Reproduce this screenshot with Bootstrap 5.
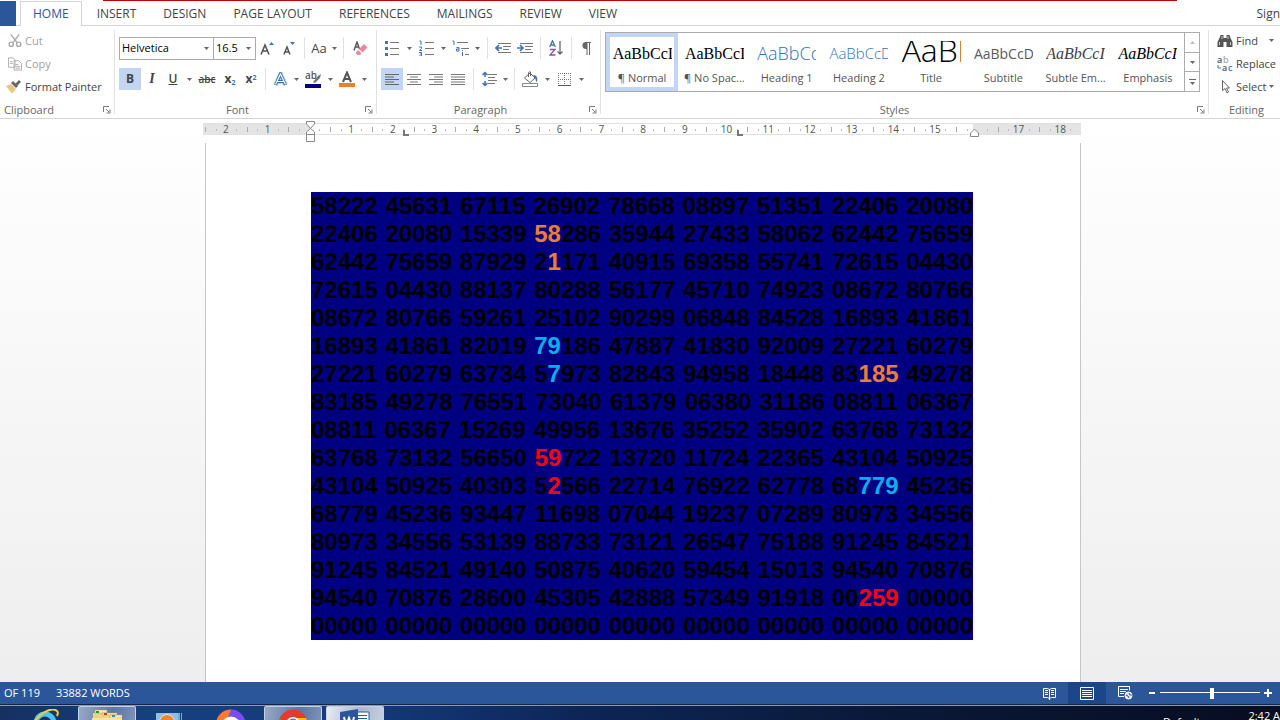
<!DOCTYPE html>
<html lang="en">
<head>
<meta charset="utf-8">
<meta name="viewport" content="width=device-width, initial-scale=1">
<title>Word</title>
<link href="https://cdn.jsdelivr.net/npm/bootstrap@5.3.0/dist/css/bootstrap.min.css" rel="stylesheet">
<style>
:root{--ui:"Open Sans","Noto Sans",sans-serif;--blue:#2b579a;--line:#d4d4d4;--ink:#444}
body{font-family:var(--ui);font-size:11px;line-height:16px;color:var(--ink);background:#fff}
button,select{font-family:inherit;color:inherit}
.app-tabs{height:26px;border-bottom:1px solid var(--line);font-size:12px}
.top-rule{height:1px;background:#c00000;margin-left:103px;margin-right:103px}
.tab-row{height:25px}
.file-tab{width:16px;background:var(--blue);border:0;margin-right:4px}
.tab-link{color:var(--ink);text-decoration:none;padding:5px 14px 0 13px;white-space:nowrap}
.tab-link.active{color:var(--blue);border:1px solid var(--line);border-bottom:0;background:#fff;padding:4px 12px 0;margin-right:2px}
.ribbon{height:93px;border-bottom:1px solid var(--line);padding-top:4px}
.grp{border-right:1px solid #e1e1e1;height:84px}
.grp-foot{height:16px;color:#666;position:relative;text-align:center;margin-top:auto;margin-bottom:-4px}
.grp-body{height:69px}
.cmds{margin-top:-1px}
.clip{width:115px}
.launch{position:absolute;right:3px;top:72px;width:8px;height:16px;border:0;background:none;padding:0}
.row-1{height:22px;margin-top:7px}
.row-2{height:22px;margin-top:9px}
.tb{border:0;background:none;padding:0;height:22px;width:22px;display:inline-flex;align-items:center;justify-content:center;flex:none}
svg{display:block;flex:none}
.tb.on{background:#c2d5f2}
.tb.w10{width:10px}.tb.w12{width:12px}.tb.w20{width:20px}.tb.w24{width:24px}
.v-line{width:1px;height:22px;background:#e1e1e1;margin:0 4px;flex:none}
.cmd{border:0;background:none;padding:0;height:23px;display:flex;align-items:center;gap:3px;white-space:nowrap}
.cmd.off{color:#a0a0a0}
.combo{appearance:none;height:23px;border:1px solid #ababab;background:#fff url("data:image/svg+xml,%3Csvg xmlns='http://www.w3.org/2000/svg' width='5' height='3'%3E%3Cpath d='M0 0h5L2.5 3z' fill='%23666'/%3E%3C/svg%3E") no-repeat right 4px center;color:#000;padding:0 2px;border-radius:0}
.gallery{border:1px solid #ababab;height:60px;margin-top:2px}
.sty{flex:1 1 72px;min-width:0;border:4px solid transparent;background:none;padding:0;height:58px;display:flex;flex-direction:column;align-items:center;color:#555}
.sty.on{border-color:#c2d5f2}
.smp{width:59px;height:29px;margin-top:4px;overflow:hidden;white-space:nowrap;text-align:left;font:16px/25px "Liberation Serif",serif;color:#000}
.smp.sans{font-family:"Open Sans",sans-serif;font-weight:300}
.smp.h1s{font-size:18px;color:#2e74b5}
.smp.h2s{font-size:15px;color:#2e74b5}
.smp.big{font-size:32px;line-height:18px}
.smp.sub{font-size:14px;font-weight:400;color:#5a5a5a}
.sty-name{white-space:nowrap}
.gal-nav{width:15px;border-left:1px solid #ababab}
.gal-nav button{width:100%;flex:1;border:0;border-bottom:1px solid #ababab;background:none;padding:0;display:flex;align-items:center;justify-content:center}
.gal-nav button:last-child{border:0}
.work{background:linear-gradient(#fff,#eee);min-height:0}
.sheet-col{width:878px;max-width:100%;margin-left:4px}
.ruler{height:12px;margin-top:4px;background:linear-gradient(90deg,#e4e4e4 107px,#fff 107px,#fff 770px,#e4e4e4 770px);box-shadow:inset 0 1px #e1e1e1,inset 0 -1px #e1e1e1;position:relative;padding-left:2px}
.cm{flex:1 1 0;text-align:center;font-size:10px;line-height:13px;color:#555;background:linear-gradient(#aaa,#aaa) 0 4px/1px 5px no-repeat,linear-gradient(#bbb,#bbb) 26% 6px/1px 2px no-repeat,linear-gradient(#bbb,#bbb) 76% 6px/1px 2px no-repeat}
.pin{position:absolute}
.pin-l{left:102px;top:-3px}.pin-r{left:766px;top:5px}.pin-t1{left:200px;top:7px}.pin-t2{left:534px;top:7px}
.sheet{background:#fff;border:1px solid #c6c6c6;border-width:0 1px;margin:8px 0 0 2px;padding:49px 107px 0 105px}
.digits{background:#000080;color:#000;font:bold 24px/28px "Liberation Sans",Arial,sans-serif;margin:0}
.digits span{display:block;text-align:justify;text-align-last:justify}
.digits b.o{color:#ed7d31}.digits b.c{color:#00b0f0}.digits b.r{color:#f00}
.status{height:23px;background:var(--blue);color:#fff;border-bottom:1px solid #12264a}
.view{border:0;background:none;width:38px;height:22px;padding:0;display:flex;align-items:center;justify-content:center}
.view.on{background:#1b4788}
.zoomer{appearance:none;width:100px;height:12px;background:linear-gradient(#fff,#fff) 0 5px/100% 1px no-repeat;margin:0}
.zoomer::-webkit-slider-thumb{appearance:none;width:4px;height:11px;background:#fff}
.zb{border:0;background:none;padding:0;width:16px;height:20px;display:flex;align-items:center;justify-content:center}
.task{height:15px;background:linear-gradient(90deg,#14305f,#16407f 12%,#143a7c 28%,#0d2656 45%,#0a1838 70%,#070d22);border-top:1px solid #8d99ad;color:#fff}
.app{width:58px;height:14px;border:0;padding:3px 0 0;background:none;overflow:hidden;display:flex;justify-content:center;align-items:flex-start;flex:none}
.app.open{background:linear-gradient(100deg,#98a9c6,#5a76a5 60%,#7c92b8);border:1px solid #c5d0e2;border-bottom:0;border-radius:2px 2px 0 0;padding-top:2px}
.app.front{background:linear-gradient(100deg,#e6eaf2,#a9b8d0 60%,#c5cfdf)}
.tray{font-size:11px;line-height:20px;white-space:nowrap;height:14px}
.tray-low{padding-top:6px}
</style>
</head>
<body class="d-flex flex-column vh-100 overflow-hidden">
<svg width="0" height="0" class="position-absolute" aria-hidden="true">
 <symbol id="car" viewBox="0 0 5 3"><path d="M0 0h5L2.500 3z" fill="#666"/></symbol>
 <symbol id="lau" viewBox="0 0 8 8"><path d="M.5 6V.5H6M3 3l3 3M7 3.500V7H3.500" fill="none" stroke="#777"/></symbol>
</svg>

<header class="app-tabs flex-shrink-0">
 <div class="top-rule"></div>
 <nav class="tab-row d-flex" aria-label="Ribbon tabs">
  <button class="file-tab" aria-label="File"></button>
  <a class="tab-link active" href="#">HOME</a>
  <a class="tab-link" href="#">INSERT</a>
  <a class="tab-link" href="#">DESIGN</a>
  <a class="tab-link" href="#">PAGE LAYOUT</a>
  <a class="tab-link" href="#">REFERENCES</a>
  <a class="tab-link" href="#">MAILINGS</a>
  <a class="tab-link" href="#">REVIEW</a>
  <a class="tab-link" href="#">VIEW</a>
  <a class="tab-link ms-auto px-0" href="#">Sign</a>
 </nav>
</header>

<div class="ribbon d-flex flex-shrink-0">
 <section class="grp clip d-flex flex-column flex-shrink-0 position-relative" aria-label="Clipboard">
  <div class="grp-body"><div class="cmds ps-1">
   <button class="cmd off ps-1"><svg width="14" height="15" viewBox="0 0 15 15" fill="none" stroke="#aaa" stroke-width="1.500"><path d="M3 1l6.500 8.500M12 1L5.500 9.500"/><circle cx="3.500" cy="11.500" r="2.300"/><circle cx="11.500" cy="11.500" r="2.300"/></svg>Cut</button>
   <button class="cmd off ps-1"><svg width="14" height="14" viewBox="0 0 15 14" fill="#fff" stroke="#b3a9b3"><path d="M.5 .5h5l2 2v8h-7zM6.500 3.500h5l3 3v7h-8z"/><path d="M2 4.500h3M2 6.500h3M8 7.500h3M8 9.500h5M8 11.500h5"/></svg>Copy</button>
   <button class="cmd"><svg width="18" height="15" viewBox="0 0 18 15"><path d="M2 7l5-2 5 5-4 4.500z" fill="#edc282"/><path d="M7 4l2-2 5 5-2 2z" fill="#666"/><path d="M11 5l4-4 2 2-4 4z" fill="#666"/></svg>Format Painter</button>
  </div></div>
  <div class="grp-foot text-start"><span class="ps-1 ms-n1">Clipboard</span></div>
  <button class="launch" aria-label="Clipboard pane"><svg width="8" height="8"><use href="#lau"/></svg></button>
 </section>

 <section class="grp d-flex flex-column flex-shrink-0 position-relative px-1" aria-label="Font">
  <div class="grp-body">
   <div class="row-1 d-flex align-items-center">
    <select class="combo" style="width:95px" aria-label="Font name"><option>Helvetica</option></select>
    <select class="combo" style="width:43px;margin-left:-1px" aria-label="Font size"><option>16.5</option></select>
    <button class="tb" aria-label="Grow font"><svg width="14" height="16" viewBox="0 0 14 16"><path d="M1 14.500L5 5l4 9.500M2.500 11h5" fill="none" stroke="#555" stroke-width="1.600"/><path d="M9 5l2.500-3L14 5z" fill="#3f74b0"/></svg></button>
    <button class="tb" aria-label="Shrink font"><svg width="14" height="16" viewBox="0 0 14 16"><path d="M2 14.500L5 7l3 7.500M3 12h4" fill="none" stroke="#555" stroke-width="1.500"/><path d="M8 2l2.500 3L13 2z" fill="#3f74b0"/></svg></button>
    <span class="v-line"></span>
    <button class="tb w20" aria-label="Change case"><span style="font-size:13px">Aa</span></button>
    <button class="tb w10" aria-label="More case options"><svg width="5" height="3"><use href="#car"/></svg></button>
    <span class="v-line"></span>
    <button class="tb w24" aria-label="Clear formatting"><svg width="15" height="15" viewBox="0 0 15 15"><path d="M1 9.500L4 1l2.500 7M2 6h4" fill="none" stroke="#555" stroke-width="1.400"/><path d="M6 8l5-5 3.500 3.500-5 5z" fill="#e88a9b"/><path d="M5 9l3.500 3.500L7 14H4.500L2.500 12z" fill="#e88a9b"/></svg></button>
   </div>
   <div class="row-2 d-flex align-items-center">
    <button class="tb on fw-bold" style="font-size:12px">B</button>
    <button class="tb" style="font:italic bold 14px 'Liberation Serif',serif">I</button>
    <button class="tb w20 fw-semibold text-decoration-underline" style="font-size:12px">U</button>
    <button class="tb w12" aria-label="Underline options"><svg width="5" height="3"><use href="#car"/></svg></button>
    <button class="tb w24 text-decoration-line-through fw-semibold" style="font-size:10px">abc</button>
    <button class="tb fw-bold" style="font-size:12px" aria-label="Subscript"><span>x<sub style="font-size:7px;color:#3f74b0">2</sub></span></button>
    <button class="tb w20 fw-bold" style="font-size:12px" aria-label="Superscript"><span>x<sup style="font-size:7px;color:#3f74b0">2</sup></span></button>
    <span class="v-line"></span>
    <button class="tb w20" aria-label="Text effects"><svg width="15" height="15" viewBox="0 0 15 15" fill="none"><path d="M2.500 13L7.500 2l5 11M4.500 9.500h6" stroke="#c3d9f2" stroke-width="5"/><path d="M2.500 13L7.500 2l5 11M4.500 9.500h6" stroke="#2e6cad" stroke-width="3"/><path d="M2.500 12.500L7.500 2l5 10.500M4.500 9.500h6" stroke="#fff" stroke-width="1.200"/></svg></button>
    <button class="tb w12" aria-label="Text effect options"><svg width="5" height="3"><use href="#car"/></svg></button>
    <button class="tb" aria-label="Highlight"><svg width="16" height="17" viewBox="0 0 16 17"><text x="0" y="8" font-size="10" font-weight="600" fill="#555">ab</text><path d="M8 11l5-6 3-2-1 4-5 5z" fill="#777"/><path d="M0 13h16v4H0z" fill="#000080"/></svg></button>
    <button class="tb w12" aria-label="Highlight options"><svg width="5" height="3"><use href="#car"/></svg></button>
    <button class="tb" aria-label="Font color"><svg width="16" height="16" viewBox="0 0 16 16"><path d="M4 11L8 1.500 12 11M5.500 8h5" fill="none" stroke="#555" stroke-width="2"/><path d="M0 12h16v4H0z" fill="#ed7d31"/></svg></button>
    <button class="tb w12" aria-label="Font color options"><svg width="5" height="3"><use href="#car"/></svg></button>
   </div>
  </div>
  <div class="grp-foot pe-3">Font</div>
  <button class="launch" aria-label="Font settings"><svg width="8" height="8"><use href="#lau"/></svg></button>
 </section>

 <section class="grp d-flex flex-column flex-shrink-0 position-relative ps-1 pe-1" aria-label="Paragraph">
  <div class="grp-body">
   <div class="row-1 d-flex align-items-center">
    <button class="tb" aria-label="Bullets"><svg width="14" height="16" viewBox="0 0 14 16"><path d="M5 2.500h9M5 8.500h9M5 14.500h9" stroke="#777"/><path d="M0 1h3v3H0zM0 7h3v3H0zM0 13h3v3H0z" fill="#3f74b0"/></svg></button>
    <button class="tb w12" aria-label="Bullet options"><svg width="5" height="3"><use href="#car"/></svg></button>
    <button class="tb" aria-label="Numbering"><svg width="15" height="16" viewBox="0 0 15 16"><path d="M6 2.500h9M6 8.500h9M6 14.500h9" stroke="#777"/><path d="M.5 1H2v4M0 7h2.500v1.500L.5 10.500h2.500M0 12.500h2.500v3.500H0M1 14h1.500" fill="none" stroke="#3f74b0"/></svg></button>
    <button class="tb w12" aria-label="Numbering options"><svg width="5" height="3"><use href="#car"/></svg></button>
    <button class="tb" aria-label="Multilevel list"><svg width="17" height="16" viewBox="0 0 17 16"><path d="M5 2.500h11M9 8.500h8M13 14.500h4" stroke="#777"/><path d="M.5 1H2v4M4.500 7.500h2.500V11H4.500V9H7M10.500 10v1M10.500 12v4" fill="none" stroke="#3f74b0"/></svg></button>
    <button class="tb w12" aria-label="Multilevel options"><svg width="5" height="3"><use href="#car"/></svg></button>
    <span class="v-line"></span>
    <button class="tb" aria-label="Decrease indent"><svg width="16" height="13" viewBox="0 0 16 13"><path d="M3 1.500h13M8 4.500h8M8 7.500h6M3 10.500h13" stroke="#777"/><path d="M7 6H1.500M4 3L1 6l3 3" fill="none" stroke="#3f74b0" stroke-width="1.700"/></svg></button>
    <button class="tb" aria-label="Increase indent"><svg width="16" height="13" viewBox="0 0 16 13"><path d="M3 1.500h13M8 4.500h8M8 7.500h6M3 10.500h13" stroke="#777"/><path d="M0 6h6M3 3l3 3-3 3" fill="none" stroke="#3f74b0" stroke-width="1.700"/></svg></button>
    <span class="v-line"></span>
    <button class="tb" aria-label="Sort"><svg width="14" height="16" viewBox="0 0 14 16" fill="none"><path d="M.700 7L3.500 .700 6.300 7M1.700 5h3.600" stroke="#3f74b0" stroke-width="1.300"/><path d="M1 9.500h5L1 15h5.500" stroke="#8b4fa8" stroke-width="1.300"/><path d="M11 1v13M8.500 11.500L11 14l2.500-2.500" stroke="#666" stroke-width="1.300"/></svg></button>
    <span class="v-line"></span>
    <button class="tb w20" aria-label="Show paragraph marks"><svg width="10" height="13" viewBox="0 0 10 13"><path d="M4.500 0H10v1H9v12H8V1H6.500v12h-1V7A3.500 3.500 0 0 1 4.500 0z" fill="#666"/></svg></button>
   </div>
   <div class="row-2 d-flex align-items-center">
    <button class="tb on" aria-label="Align left"><svg width="14" height="11" viewBox="0 0 14 11"><path d="M0 .5h14M0 3h9M0 5.500h14M0 8h9M0 10.500h14" stroke="#666"/></svg></button>
    <button class="tb" aria-label="Center"><svg width="14" height="11" viewBox="0 0 14 11"><path d="M0 .5h14M3 3h8M0 5.500h14M3 8h8M0 10.500h14" stroke="#777"/></svg></button>
    <button class="tb" aria-label="Align right"><svg width="14" height="11" viewBox="0 0 14 11"><path d="M0 .5h14M5 3h9M0 5.500h14M5 8h9M0 10.500h14" stroke="#777"/></svg></button>
    <button class="tb" aria-label="Justify"><svg width="14" height="11" viewBox="0 0 14 11"><path d="M0 .5h14M0 3h14M0 5.500h14M0 8h14M0 10.500h14" stroke="#777"/></svg></button>
    <span class="v-line"></span>
    <button class="tb" aria-label="Line spacing"><svg width="15" height="16" viewBox="0 0 15 16" fill="none"><path d="M6 3.500h9M6 6.500h7M6 9.500h9M6 12.500h7" stroke="#777"/><path d="M3 1.500v4.500M3 10v4.500M.500 4L3 1.500 5.500 4M.500 12L3 14.500 5.500 12" stroke="#3f74b0" stroke-width="1.500"/></svg></button>
    <button class="tb w10" aria-label="Spacing options"><svg width="5" height="3"><use href="#car"/></svg></button>
    <span class="v-line"></span>
    <button class="tb" aria-label="Shading"><svg width="16" height="16" viewBox="0 0 16 16"><path d="M2.500 7L8 2l5 5-5 4.500z" fill="#fff" stroke="#666"/><path d="M6.500 6V1.500A1.500 1.500 0 0 1 8.500 1V5" fill="none" stroke="#666"/><path d="M11 4c4 0 5 3 4 7-1 0-1-2-2-4z" fill="#3f74b0"/><path d="M.5 12.500h15v3H.5z" fill="#fff" stroke="#888"/></svg></button>
    <button class="tb w12" aria-label="Shading options"><svg width="5" height="3"><use href="#car"/></svg></button>
    <button class="tb" aria-label="Borders"><svg width="13" height="13" viewBox="0 0 13 13"><path d="M0 .5h13M0 6.500h13M.5 0v13M6.500 0v13M12.500 0v13" stroke="#777" stroke-dasharray="1 1"/><path d="M0 12.500h13" stroke="#555"/></svg></button>
    <button class="tb w12" aria-label="Border options"><svg width="5" height="3"><use href="#car"/></svg></button>
   </div>
  </div>
  <div class="grp-foot pe-3">Paragraph</div>
  <button class="launch" aria-label="Paragraph settings"><svg width="8" height="8"><use href="#lau"/></svg></button>
 </section>

 <section class="grp d-flex flex-column flex-grow-1 position-relative ps-1 pe-2" style="min-width:0" aria-label="Styles">
  <div class="grp-body">
   <div class="gallery d-flex">
    <button class="sty on"><span class="smp">AaBbCcI</span><span class="sty-name">¶ Normal</span></button>
    <button class="sty"><span class="smp">AaBbCcI</span><span class="sty-name">¶ No Spac...</span></button>
    <button class="sty"><span class="smp sans h1s">AaBbCc</span><span class="sty-name">Heading 1</span></button>
    <button class="sty"><span class="smp sans h2s">AaBbCcD</span><span class="sty-name">Heading 2</span></button>
    <button class="sty"><span class="smp sans big">AaBb</span><span class="sty-name">Title</span></button>
    <button class="sty"><span class="smp sans sub">AaBbCcD</span><span class="sty-name">Subtitle</span></button>
    <button class="sty"><span class="smp fst-italic" style="color:#404040">AaBbCcI</span><span class="sty-name">Subtle Em...</span></button>
    <button class="sty"><span class="smp fst-italic">AaBbCcI</span><span class="sty-name">Emphasis</span></button>
    <div class="gal-nav d-flex flex-column flex-shrink-0">
     <button aria-label="Previous styles"><svg width="5" height="3" viewBox="0 0 5 3"><path d="M0 3h5L2.500 0z" fill="#bbb"/></svg></button>
     <button aria-label="Next styles"><svg width="5" height="3"><use href="#car"/></svg></button>
     <button aria-label="All styles"><svg width="7" height="6" viewBox="0 0 7 6"><path d="M0 0h7v1H0zM1 3h5L3.500 6z" fill="#666"/></svg></button>
    </div>
   </div>
  </div>
  <div class="grp-foot pe-3">Styles</div>
  <button class="launch" aria-label="Styles pane"><svg width="8" height="8"><use href="#lau"/></svg></button>
 </section>

 <section class="d-flex flex-column flex-shrink-0 ps-2 pe-1" style="height:84px" aria-label="Editing">
  <div class="grp-body"><div class="cmds">
   <button class="cmd"><svg width="16" height="13" viewBox="0 0 15 13" fill="#555"><path d="M3 1h3v3h3V1h3l1 3 2 4v5H9V8H6v5H0V8l2-4z"/><path d="M2 8v3M13 8v3M4.500 2v3M10.500 2v3" stroke="#ccc"/></svg>Find<svg class="ms-2" width="5" height="3"><use href="#car"/></svg></button>
   <button class="cmd"><svg width="16" height="16" viewBox="0 0 16 16" font-size="9" font-weight="600"><text y="7" fill="#555">a</text><text x="6" y="7" fill="#aaa">b</text><text x="5" y="15" fill="#555">a</text><text x="11" y="15" fill="#3f74b0">c</text><path d="M1 9v3h3" fill="none" stroke="#3f74b0"/></svg>Replace</button>
   <button class="cmd"><svg width="16" height="15" viewBox="0 0 16 15"><path d="M5.500 1.500v10l2.500-2 2 4.500 1.500-1-2-4h3z" fill="#fff" stroke="#666"/></svg>Select<svg width="5" height="3"><use href="#car"/></svg></button>
  </div></div>
  <div class="grp-foot text-center">Editing</div>
 </section>
</div>

<main class="work flex-grow-1 overflow-hidden d-flex flex-column align-items-center">
 <div class="sheet-col d-flex flex-column flex-grow-1">
  <div class="ruler d-flex">
   <span class="cm">2</span><span class="cm">1</span><span class="cm"></span><span class="cm">1</span><span class="cm">2</span><span class="cm">3</span><span class="cm">4</span><span class="cm">5</span><span class="cm">6</span><span class="cm">7</span><span class="cm">8</span><span class="cm">9</span><span class="cm">10</span><span class="cm">11</span><span class="cm">12</span><span class="cm">13</span><span class="cm">14</span><span class="cm">15</span><span class="cm"></span><span class="cm">17</span><span class="cm">18</span>
   <svg class="pin pin-l" width="11" height="23" viewBox="0 0 11 23"><path d="M1.500 1.500h8V4L5.500 8.500 1.500 4zM1.500 14.500V12L5.500 8.500 9.500 12v2.500zM1.500 14.500h8v7h-8z" fill="#fff" stroke="#888"/></svg>
   <svg class="pin pin-t1" width="6" height="6" viewBox="0 0 6 6"><path d="M0 0h2v4h4v2H0z" fill="#777"/></svg>
   <svg class="pin pin-t2" width="6" height="6" viewBox="0 0 6 6"><path d="M0 0h2v4h4v2H0z" fill="#777"/></svg>
   <svg class="pin pin-r" width="11" height="10" viewBox="0 0 11 10"><path d="M1.500 8.500V5l4-4 4 4v3.500z" fill="#fff" stroke="#888"/></svg>
  </div>
  <article class="sheet flex-grow-1">
   <p class="digits">
    <span>58222 45631 67115 26902 78668 08897 51351 22406 20080</span>
    <span>22406 20080 15339 <b class="o">58</b>286 35944 27433 58062 62442 75659</span>
    <span>62442 75659 87929 2<b class="o">1</b>171 40915 69358 55741 72615 04430</span>
    <span>72615 04430 88137 80288 56177 45710 74923 08672 80766</span>
    <span>08672 80766 59261 25102 90299 06848 84528 16893 41861</span>
    <span>16893 41861 82019 <b class="c">79</b>186 47887 41830 92009 27221 60279</span>
    <span>27221 60279 63734 5<b class="c">7</b>973 82843 94958 18448 83<b class="o">185</b> 49278</span>
    <span>83185 49278 76551 73040 61379 06380 31186 08811 06367</span>
    <span>08811 06367 15269 49956 13676 35252 35902 63768 73132</span>
    <span>63768 73132 56650 <b class="r">59</b>722 13720 11724 22365 43104 50925</span>
    <span>43104 50925 40303 5<b class="r">2</b>566 22714 76922 62778 68<b class="c">779</b> 45236</span>
    <span>68779 45236 93447 11698 07044 19237 07289 80973 34556</span>
    <span>80973 34556 53139 88733 73121 26547 75188 91245 84521</span>
    <span>91245 84521 49140 50875 40620 59454 15013 94540 70876</span>
    <span>94540 70876 28600 45305 42888 57349 91918 00<b class="r">259</b> 00000</span>
    <span>00000 00000 00000 00000 00000 00000 00000 00000 00000</span>
   </p>
  </article>
 </div>
</main>

<footer class="flex-shrink-0">
 <div class="status d-flex align-items-center">
  <span class="ps-1">OF 119</span><span class="ps-3">33882 WORDS</span>
  <div class="ms-auto d-flex align-items-center">
   <button class="view" aria-label="Read mode"><svg width="13" height="13" viewBox="0 0 13 13" fill="none" stroke="#fff"><path d="M.5 1.500h4l2 1 2-1h4v9h-4l-2 1-2-1h-4zM6.500 2v11"/><path d="M2 3.500h3M2 5.500h3M2 7.500h3M8 3.500h3M8 5.500h3M8 7.500h3"/></svg></button>
   <button class="view on" aria-label="Print layout"><svg width="14" height="13" viewBox="0 0 14 13" fill="none" stroke="#fff"><path d="M.5 .5h13v12H.5zM2 3.500h10M2 5.500h10M2 7.500h10M2 9.500h10"/></svg></button>
   <button class="view" aria-label="Web layout"><svg width="15" height="14" viewBox="0 0 15 14" fill="none" stroke="#fff"><path d="M6 10.500H.5V.5h11v4M2 3.500h8M2 5.500h6M2 7.500h4"/><circle cx="10.500" cy="9.500" r="3.500" fill="#dce6f5"/><path d="M8 9l2 1 1 2M11 7l1 2 2 0" stroke="#2b579a"/></svg></button>
   <button class="zb" aria-label="Zoom out"><svg width="6" height="2"><path d="M0 0h6v2H0z" fill="#fff"/></svg></button>
   <input class="zoomer" type="range" min="0" max="100" value="52" aria-label="Zoom">
   <button class="zb" aria-label="Zoom in"><svg width="8" height="8"><path d="M0 3h8v2H0zM3 0h2v8H3z" fill="#fff"/></svg></button>
   <span class="pe-1"></span>
  </div>
 </div>
 <div class="task d-flex overflow-hidden">
  <span class="ps-3"></span>
  <button class="app" aria-label="Internet Explorer"><svg width="28" height="26" viewBox="0 0 28 26"><circle cx="14" cy="14" r="9" fill="none" stroke="#4fc3ee" stroke-width="5"/><path d="M2 16C6 6 20-3 26 2c1 1 1 3 0 5" fill="none" stroke="#f4cf2e" stroke-width="2"/></svg></button>
  <button class="app open ms-1" aria-label="File Explorer"><svg width="32" height="26" viewBox="0 0 32 26"><path d="M2 4h14l2 2h12v20H2z" fill="#ecd388"/><path d="M4 1h12v3H4zM11 4h15v2H11zM19 6h12v3H19z" fill="#fbeebc" stroke="#b99a4c" stroke-width=".5"/><path d="M5 2h3v2H5z" fill="#1a9b38"/><path d="M13 4h3v2h-3z" fill="#c63b2b"/><path d="M21 6h3v2h-3z" fill="#2b8fd6"/><path d="M1 9h30v17H1z" fill="#f6e3a0"/></svg></button>
  <button class="app ms-1" aria-label="Media Player"><svg width="27" height="22" viewBox="0 0 27 22"><path d="M0 4h22v18H0z" fill="#8cc1e3"/><path d="M22 4h2v18h-2zM25 4h1v18h-1z" fill="#76abd3"/><circle cx="11" cy="13" r="7.500" fill="#ee8430" stroke="#fff" stroke-width=".7"/></svg></button>
  <button class="app ms-1" aria-label="Browser"><svg width="30" height="30" viewBox="0 0 30 30"><circle cx="15" cy="15" r="14.500" fill="#7a4cf0"/><path d="M1 20A14.500 14.500 0 0 1 15 .5l-3 8z" fill="#ff7a2e"/><circle cx="15" cy="17" r="9.500" fill="#fff"/></svg></button>
  <button class="app open ms-1" aria-label="Chrome"><svg width="30" height="30" viewBox="0 0 30 30"><circle cx="15" cy="15" r="14.500" fill="#e33b2e"/><path d="M15 9h13a14.500 14.500 0 0 1-6 19z" fill="#fbc116"/><path d="M2 9l8 9 4 11A14.500 14.500 0 0 1 2 9z" fill="#2da94f"/><circle cx="15" cy="15" r="7" fill="#fff"/><circle cx="15" cy="15" r="5.500" fill="#3b7ded"/></svg></button>
  <button class="app open front ms-1" aria-label="Word"><svg width="30" height="26" viewBox="0 0 30 26"><path d="M17 3h12v22H17z" fill="#fff" stroke="#2b579a"/><path d="M18 6.500h9M18 9.500h9" stroke="#2b579a"/><path d="M0 3l18-3v26L0 23z" fill="#2b579a"/><path d="M4 8l2 9 3-8 3 8 2-9" fill="none" stroke="#fff" stroke-width="2"/></svg></button>
  <div class="tray ms-auto d-flex"><span class="tray-low">Default</span><span class="ps-5">2:42 A</span></div>
 </div>
</footer>
<script src="https://cdn.jsdelivr.net/npm/bootstrap@5.3.0/dist/js/bootstrap.bundle.min.js"></script>
</body>
</html>
